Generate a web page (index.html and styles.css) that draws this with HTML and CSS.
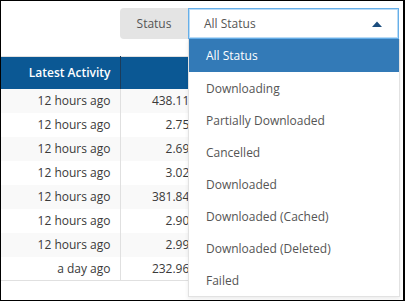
FILE: index.html
```html
<!DOCTYPE html>
<html lang="en">
<head>
  <meta charset="UTF-8" />
  <title>Downloads</title>
  <link rel="stylesheet" href="styles.css">
</head>
<body>
  <div class="frame">
    <div class="toolbar">
      <div class="filter">
        <span class="filter-label">Status</span>
        <div class="select">
          <span>All Status</span>
          <svg class="caret" width="10" height="6" viewBox="0 0 10 6"><path d="M0 6 L5 0.5 L10 6 Z" fill="#1b4d7e"/></svg>
          <ul class="dropdown">
            <li class="selected">All Status</li>
            <li>Downloading</li>
            <li>Partially Downloaded</li>
            <li>Cancelled</li>
            <li>Downloaded</li>
            <li>Downloaded (Cached)</li>
            <li>Downloaded (Deleted)</li>
            <li>Failed</li>
          </ul>
        </div>
      </div>
    </div>

    <table class="grid">
      <thead>
        <tr><th>Latest Activity</th><th>Size</th></tr>
      </thead>
      <tbody>
        <tr><td>12 hours ago</td><td>438.11 MB</td></tr>
        <tr><td>12 hours ago</td><td>2.75 MB</td></tr>
        <tr><td>12 hours ago</td><td>2.69 MB</td></tr>
        <tr><td>12 hours ago</td><td>3.02 MB</td></tr>
        <tr><td>12 hours ago</td><td>381.84 MB</td></tr>
        <tr><td>12 hours ago</td><td>2.90 MB</td></tr>
        <tr><td>12 hours ago</td><td>2.99 MB</td></tr>
        <tr><td>a day ago</td><td>232.96 MB</td></tr>
      </tbody>
    </table>
  </div>
</body>
</html>
```

FILE: styles.css
```css
* { box-sizing: border-box; }
body {
  margin: 0;
  font-family: "Open Sans", "Liberation Sans", Arial, sans-serif;
  font-size: 12px;
  color: #333;
  background: #fff;
}
.frame {
  position: relative;
  width: 405px;
  height: 301px;
  border: 1px solid #000;
  border-right-width: 2px;
  overflow: hidden;
}
.toolbar {
  display: flex;
  justify-content: flex-end;
  padding: 7px 4px 0 0;
}
.filter {
  display: flex;
  height: 31px;
}
.filter-label {
  width: 68px;
  display: flex;
  align-items: center;
  justify-content: center;
  background: #e4e4e4;
  color: #555;
  border-radius: 4px 0 0 4px;
}
.select {
  position: relative;
  z-index: 2;
  width: 211px;
  display: flex;
  align-items: center;
  justify-content: space-between;
  padding: 0 16px 0 15px;
  border: 1px solid #66afe9;
  box-shadow: 0 0 0 1px rgba(102, 175, 233, 0.45) inset;
  color: #555;
  background: #fff;
}
.caret { display: block; }
.dropdown {
  position: absolute;
  top: calc(100% + 1px);
  left: -1px;
  width: 212px;
  margin: 0;
  padding: 0;
  list-style: none;
  background: #fff;
  border: 1px solid #e2e2e2;
  border-top: none;
  box-shadow: 0 2px 4px rgba(0, 0, 0, 0.08);
}
.dropdown li {
  height: 32px;
  line-height: 34px;
  padding: 0 17px;
  color: #555;
  white-space: nowrap;
}
.dropdown li.selected {
  height: 33px;
  background: #337ab7;
  color: #fff;
}
.grid {
  margin-top: 17px;
  border-collapse: collapse;
  border-top: 1px solid #e0e0e0;
  border-bottom: 1px solid #e0e0e0;
  width: 219px;
}
.grid th {
  height: 32px;
  background: #0b5894;
  color: #fff;
  font-weight: 600;
  text-align: right;
  padding: 0 9px 0 0;
}
.grid th:first-child {
  width: 119px;
  border-right: 1px solid #1c3c5a;
}
.grid td {
  height: 24px;
  text-align: right;
  padding: 0 9px 0 0;
  color: #3a3a3a;
}
.grid td:first-child { border-right: 1px solid #e0e0e0; }
.grid tbody tr:nth-child(odd) { background: #f9f9f9; }
```
